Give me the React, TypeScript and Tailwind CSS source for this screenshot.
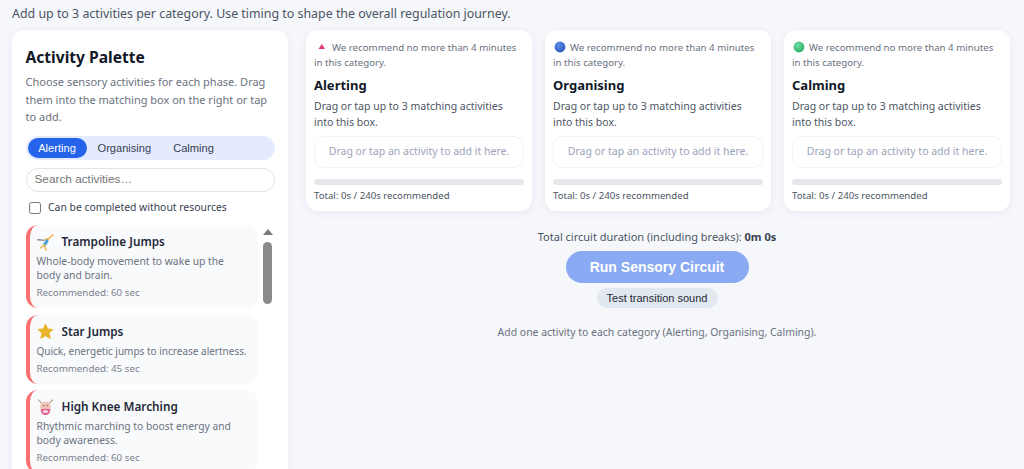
import React from "react";

const sans = { fontFamily: '"Noto Sans", sans-serif' };
const arial = { fontFamily: '"Liberation Sans", sans-serif' };

function Triangle() {
  return (
    <svg width="18" height="12" viewBox="0 0 18 12" className="shrink-0">
      <defs>
        <linearGradient id="tri" x1="0" y1="0" x2="0" y2="1">
          <stop offset="0" stopColor="#f0566f" />
          <stop offset="1" stopColor="#d92f86" />
        </linearGradient>
      </defs>
      <path d="M7.8 2.8 L11 8 H4.6 Z" fill="url(#tri)" />
    </svg>
  );
}

function Ball({ from, to, id }: { from: string; to: string; id: string }) {
  return (
    <svg width="17" height="12" viewBox="0 0 17 12" className="shrink-0">
      <defs>
        <radialGradient id={id} cx="0.4" cy="0.35" r="0.75">
          <stop offset="0" stopColor={from} />
          <stop offset="1" stopColor={to} />
        </radialGradient>
      </defs>
      <circle cx="7" cy="6" r="5.4" fill={`url(#${id})`} />
    </svg>
  );
}

function Gymnast() {
  return (
    <svg width="17" height="17" viewBox="0 0 17 17" className="shrink-0">
      <circle cx="9.6" cy="5.6" r="1.6" fill="#f2b84b" />
      <path d="M16 0.8 L10.6 5.6" stroke="#f2b84b" strokeWidth="1.5" strokeLinecap="round" />
      <path d="M0.8 5.8 L7 6.2" stroke="#8a8f96" strokeWidth="1.4" strokeLinecap="round" />
      <path d="M10 7 L7.4 11" stroke="#3f9fe0" strokeWidth="3.2" strokeLinecap="round" />
      <path d="M7.4 11 L3.5 14" stroke="#f2b84b" strokeWidth="1.5" strokeLinecap="round" />
      <path d="M7.4 11 L9 16" stroke="#f2b84b" strokeWidth="1.5" strokeLinecap="round" />
    </svg>
  );
}

function Star() {
  return (
    <svg width="17" height="17" viewBox="0 0 17 17" className="shrink-0">
      <path
        d="M8.5 1 L10.7 5.9 L16 6.5 L12 10.1 L13.2 15.4 L8.5 12.7 L3.8 15.4 L5 10.1 L1 6.5 L6.3 5.9 Z"
        fill="#eab52a"
        stroke="#eab52a"
        strokeWidth="1"
        strokeLinejoin="round"
      />
    </svg>
  );
}

function Dancer() {
  return (
    <svg width="17" height="17" viewBox="0 0 17 17" className="shrink-0">
      <path d="M1.5 1 L5 4.5 M15.5 1 L12 4.5" stroke="#c9a79c" strokeWidth="1.2" strokeLinecap="round" />
      <circle cx="8.5" cy="8" r="5.4" fill="#edc4b8" />
      <path d="M3.6 10.5 Q8.5 8.8 13.4 10.5 Q12.8 16 8.5 16 Q4.2 16 3.6 10.5 Z" fill="#dd5f96" />
      <ellipse cx="8.5" cy="12.4" rx="2.8" ry="1.5" fill="#f6d5df" />
      <circle cx="6.7" cy="6.6" r="0.7" fill="#7a5850" />
      <circle cx="10.3" cy="6.6" r="0.7" fill="#7a5850" />
    </svg>
  );
}

function ActivityCard({
  icon,
  title,
  desc,
  rec,
  single,
}: {
  icon: React.ReactNode;
  title: string;
  desc: string;
  rec: string;
  single?: boolean;
}) {
  return (
    <div className="rounded-[12px] border-l-[4px] border-[#f87171] bg-[#f9fafc] pl-[7px] pr-[6px] pt-[7px] pb-[8px]">
      <div className="flex h-[20px] items-center gap-[8px]">
        <span className="flex w-[17px] justify-center">{icon}</span>
        <span className="text-[11.75px] font-semibold text-[#1f2937]">{title}</span>
      </div>
      <p
        className={
          single
            ? "mt-[2px] whitespace-nowrap text-[10px] leading-[14px] text-[#6b7280]"
            : "mt-[2px] max-w-[205px] text-[10.3px] leading-[14px] text-[#6b7280]"
        }
      >
        {desc}
      </p>
      <p className="mt-[4px] text-[9.75px] leading-[14px] text-[#7b818c]">{rec}</p>
    </div>
  );
}

function CategoryCard({ icon, title }: { icon: React.ReactNode; title: string }) {
  return (
    <div className="flex h-[181px] w-[226px] flex-col rounded-[12px] bg-white px-[8px] pt-[10px] shadow-[0_2px_8px_rgba(30,41,80,0.06)]">
      <p className="text-[9.7px] leading-[15px] text-[#6b7280]">
        <span className="inline-flex align-[-2px]">{icon}</span>
        We recommend no more than 4 minutes in this category.
      </p>
      <h3 className="mt-[5px] text-[13px] font-bold leading-[20px] text-[#111827]">{title}</h3>
      <p className="mt-[3px] text-[10.5px] leading-[16px] text-[#4b5563]">
        Drag or tap up to 3 matching activities into this box.
      </p>
      <div className="mt-[6px] flex h-[32px] shrink-0 items-center justify-center rounded-[10px] border border-dotted border-[#dfe5f5]">
        <span className="text-[10.5px] text-[#9ca3b8]">Drag or tap an activity to add it here.</span>
      </div>
      <div className="mt-[11px] h-[5.5px] shrink-0 rounded-full bg-[#e5e7eb]" />
      <p className="mt-[4px] text-[9.65px] leading-[14px] text-[#4b5563]">Total: 0s / 240s recommended</p>
    </div>
  );
}

export default function App() {
  return (
    <div style={sans} className="h-[469px] w-[1024px] overflow-hidden bg-[#f5f7fb]">
      <p className="px-[12px] pt-[5px] text-[12.4px] leading-[17px] text-[#4b5563]">
        Add up to 3 activities per category. Use timing to shape the overall regulation journey.
      </p>
      <div className="mt-[8px] flex items-start gap-[18px] pl-[12px]">
        <aside className="h-[460px] w-[276px] shrink-0 rounded-[12px] bg-white pl-[13.5px] pr-[13px] pt-[16px] shadow-[0_2px_8px_rgba(30,41,80,0.06)]">
          <h2 className="text-[15.6px] font-bold leading-[22px] text-[#111827]">Activity Palette</h2>
          <p className="mt-[5px] w-[248px] text-[11px] leading-[17.5px] text-[#6b7280]">
            Choose sensory activities for each phase. Drag them into the matching box on the right or tap to add.
          </p>
          <div style={arial} className="mt-[10.5px] flex h-[24px] w-[249.5px] items-center rounded-full bg-[#e4ebff] px-[2px] text-[11.1px]">
            <span className="flex h-[20px] w-[59px] items-center justify-center rounded-full bg-[#2563eb] text-white">Alerting</span>
            <span className="ml-[11px] text-[#374151]">Organising</span>
            <span className="ml-[22px] text-[#374151]">Calming</span>
          </div>
          <div style={arial} className="mt-[8px] flex h-[24px] w-[249.5px] items-center rounded-full border border-[#dfe3ea] px-[8px] text-[11.8px] text-[#757575]">
            Search activities…
          </div>
          <label className="mt-[8px] flex h-[16px] items-center gap-[7px] pl-[3.5px] text-[10.4px] text-[#374151]">
            <span className="h-[12px] w-[12px] rounded-[2.5px] border border-[#767676] bg-white" />
            Can be completed without resources
          </label>
          <div className="mt-[9px] flex gap-[5px]">
            <div className="flex w-[232px] shrink-0 flex-col gap-[6.5px]">
              <ActivityCard icon={<Gymnast />} title="Trampoline Jumps" desc="Whole-body movement to wake up the body and brain." rec="Recommended: 60 sec" />
              <ActivityCard icon={<Star />} single title="Star Jumps" desc="Quick, energetic jumps to increase alertness." rec="Recommended: 45 sec" />
              <ActivityCard icon={<Dancer />} title="High Knee Marching" desc="Rhythmic marching to boost energy and body awareness." rec="Recommended: 60 sec" />
            </div>
            <div className="flex h-[260px] w-[10px] flex-col items-center pt-[4px]">
              <svg width="10" height="6" viewBox="0 0 10 6">
                <path d="M5 0 L10 6 H0 Z" fill="#7a7a7a" />
              </svg>
              <div className="mt-[7px] h-[62px] w-[9px] rounded-full bg-[#8a8a8a]" />
            </div>
          </div>
        </aside>
        <main className="w-[704px]">
          <div className="flex gap-[13px]">
            <CategoryCard icon={<Triangle />} title="Alerting" />
            <CategoryCard icon={<Ball id="b1" from="#5a8ee8" to="#2a55b8" />} title="Organising" />
            <CategoryCard icon={<Ball id="b2" from="#6fe0a0" to="#22a765" />} title="Calming" />
          </div>
          <div className="flex flex-col items-center pr-[2px]">
            <p className="mt-[18px] text-[11px] leading-[16px] text-[#4b5563]">
              Total circuit duration (including breaks): <b className="text-[#374151]">0m 0s</b>
            </p>
            <button style={arial} className="mt-[6px] h-[32px] w-[183px] rounded-full bg-[#8aabf3] text-[14px] font-bold text-white">
              Run Sensory Circuit
            </button>
            <button style={arial} className="mt-[5px] h-[19.5px] w-[121px] rounded-full bg-[#e2e8f0] text-[11px] text-[#1f2937]">
              Test transition sound
            </button>
            <p className="mt-[16px] text-[10.45px] leading-[16px] text-[#6b7280]">
              Add one activity to each category (Alerting, Organising, Calming).
            </p>
          </div>
        </main>
      </div>
    </div>
  );
}
